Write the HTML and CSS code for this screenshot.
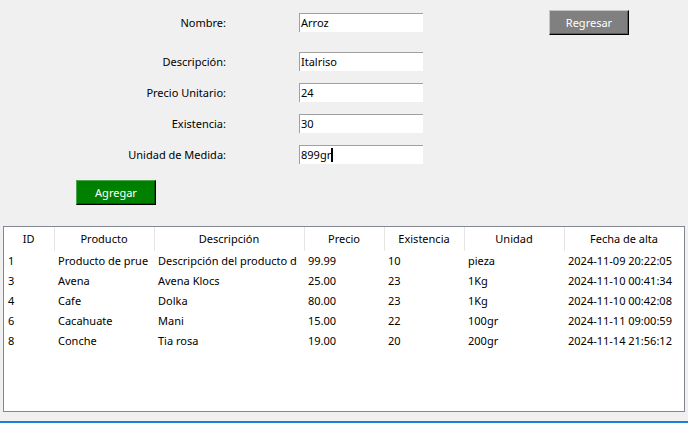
FILE: index.html
```html
<!DOCTYPE html>
<html lang="es">
<head>
<meta charset="utf-8">
<title>Productos</title>
<link rel="stylesheet" href="styles.css">
</head>
<body>
<div class="window">
  <div class="top">
    <div class="form">
      <label class="lbl first">Nombre:</label>
      <div class="field first">Arroz</div>
      <label class="lbl">Descripción:</label>
      <div class="field">Italriso</div>
      <label class="lbl">Precio Unitario:</label>
      <div class="field">24</div>
      <label class="lbl">Existencia:</label>
      <div class="field">30</div>
      <label class="lbl">Unidad de Medida:</label>
      <div class="field">899gr<span class="caret"></span></div>
    </div>
    <button class="btn btn-gray">Regresar</button>
  </div>
  <div class="actions">
    <button class="btn btn-green">Agregar</button>
  </div>
  <div class="tree">
    <table>
      <colgroup>
        <col class="c-id"><col class="c-prod"><col class="c-desc"><col class="c-precio"><col class="c-exist"><col class="c-unidad"><col class="c-fecha">
      </colgroup>
      <thead>
        <tr><th>ID</th><th>Producto</th><th>Descripción</th><th>Precio</th><th>Existencia</th><th>Unidad</th><th>Fecha de alta</th></tr>
      </thead>
      <tbody>
        <tr><td>1</td><td>Producto de prue</td><td>Descripción del producto d</td><td>99.99</td><td>10</td><td>pieza</td><td>2024-11-09 20:22:05</td></tr>
        <tr><td>3</td><td>Avena</td><td>Avena Klocs</td><td>25.00</td><td>23</td><td>1Kg</td><td>2024-11-10 00:41:34</td></tr>
        <tr><td>4</td><td>Cafe</td><td>Dolka</td><td>80.00</td><td>23</td><td>1Kg</td><td>2024-11-10 00:42:08</td></tr>
        <tr><td>6</td><td>Cacahuate</td><td>Mani</td><td>15.00</td><td>22</td><td>100gr</td><td>2024-11-11 09:00:59</td></tr>
        <tr><td>8</td><td>Conche</td><td>Tia rosa</td><td>19.00</td><td>20</td><td>200gr</td><td>2024-11-14 21:56:12</td></tr>
      </tbody>
    </table>
  </div>
</div>
</body>
</html>
```
FILE: styles.css
```css
html, body {
  margin: 0;
  padding: 0;
  background: #f0f0f0;
}
body {
  font-family: "Noto Sans", "Open Sans", sans-serif;
  font-size: 11px;
  color: #000;
  width: 688px;
  height: 423px;
  overflow: hidden;
  border-bottom: 2px solid #1a7fd9;
  box-sizing: border-box;
}
.window {
  padding-top: 10px;
}
.top {
  display: flex;
  align-items: flex-start;
}
.form {
  display: grid;
  grid-template-columns: 226px 124px;
  column-gap: 73px;
  row-gap: 12px;
  padding-top: 3px;
}
.lbl {
  text-align: right;
  line-height: 19px;
  height: 19px;
  white-space: nowrap;
}
.lbl.first, .field.first {
  margin-bottom: 8px;
}
.field {
  height: 19px;
  box-sizing: border-box;
  background: #fff;
  border-top: 1px solid #a0a0a0;
  border-left: 1px solid #a0a0a0;
  padding-left: 1px;
  line-height: 17px;
  white-space: nowrap;
}
.caret {
  display: inline-block;
  width: 2px;
  height: 14px;
  background: #000;
  vertical-align: -3px;
}
.btn {
  font-family: inherit;
  font-size: 11px;
  color: #fff;
  width: 80px;
  height: 25px;
  padding: 0;
  margin: 0;
  box-sizing: border-box;
  border-style: solid;
  border-width: 1px;
  line-height: 21px;
}
.btn-gray {
  margin-left: 126px;
  background: #808080;
  border-color: #c4c4c4 #000 #000 #c4c4c4;
  box-shadow: inset -1px -1px 0 #5a5a5a;
}
.actions {
  padding: 16px 0 0 76px;
}
.btn-green {
  background: #008000;
  border-color: #4da64d #000 #000 #4da64d;
  box-shadow: inset -1px -1px 0 #005a00;
}
.tree {
  margin: 21px 0 0 3px;
  width: 682px;
  height: 186px;
  box-sizing: border-box;
  border: 1px solid #828790;
  background: #fff;
  overflow: hidden;
}
table {
  border-collapse: collapse;
  table-layout: fixed;
  width: 680px;
}
.c-id { width: 50px; }
.c-prod { width: 100px; }
.c-desc { width: 150px; }
.c-precio { width: 80px; }
.c-exist { width: 80px; }
.c-unidad { width: 100px; }
.c-fecha { width: 120px; }
th {
  font-weight: normal;
  height: 24px;
  padding: 0 0 1px 0;
  text-align: center;
  border-right: 1px solid #e5e5e5;
  box-sizing: border-box;
  white-space: nowrap;
  overflow: hidden;
}
td {
  height: 20px;
  padding: 0 0 0 4px;
  white-space: nowrap;
  overflow: hidden;
  line-height: 20px;
}
```
